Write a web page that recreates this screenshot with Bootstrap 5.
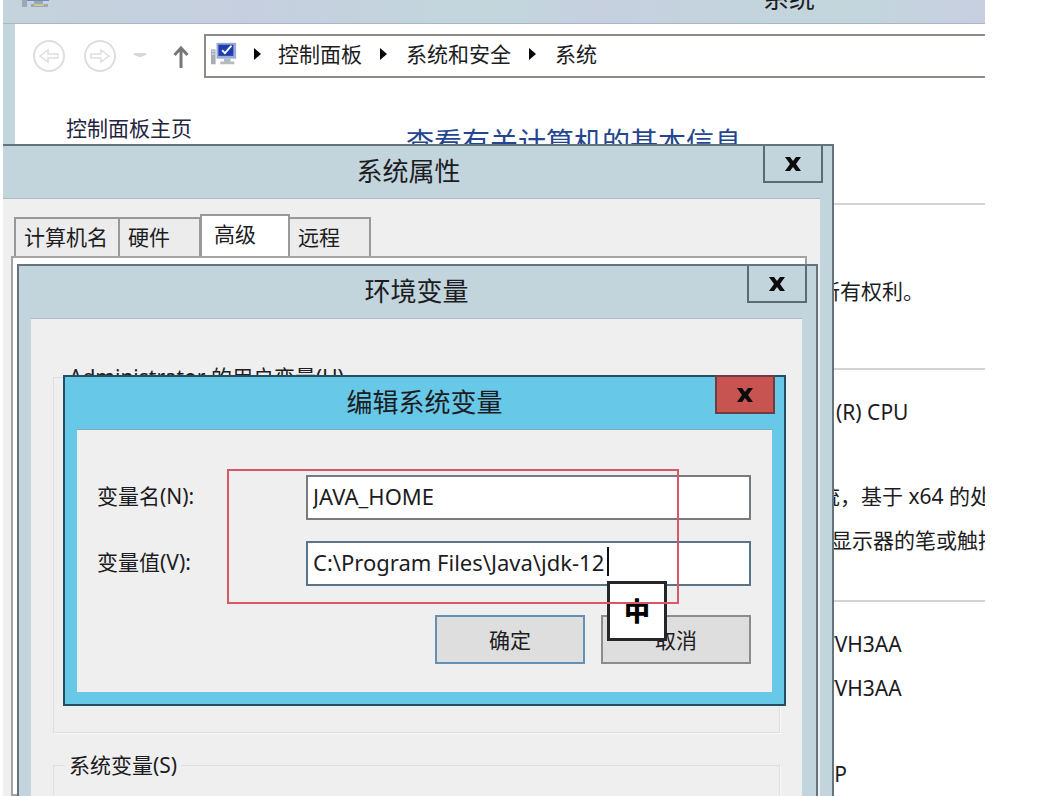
<!DOCTYPE html>
<html lang="zh-CN">
<head>
<meta charset="utf-8">
<meta name="viewport" content="width=device-width, initial-scale=1">
<title>系统</title>
<link href="https://cdn.jsdelivr.net/npm/bootstrap@5.3.0/dist/css/bootstrap.min.css" rel="stylesheet">
<style>
  body { font: 21px/44px "Noto Sans", "Noto Sans CJK SC", sans-serif; color: #1c1c22; background: #fff; }
  .desktop { height: 100vh; padding: 0 56px 0 3px; }
  .explorer { background: #c3d5dd; padding-left: 12px; }
  .explorer-title { height: 24px; margin-left: -12px; padding-right: 170px; border-bottom: 1px solid #aab7c2;
    background: linear-gradient(90deg, #c4d3dc, #c6cfdf 25%, #c2d6dc 50%, #c6d0df 60%, #c2d6dc 85%, #c8cfe0); }
  .explorer-title span, .explorer-title svg { margin-top: -28px; }
  .explorer-title span { font-size: 26px; line-height: 52px; }
  .toolbar { height: 63px; padding-left: 17px; }
  .nav-glyph { width: 34px; height: 34px; }
  .address { height: 44px; margin-left: 14px; padding-bottom: 4px; border: 2px solid #8b8b88; border-right: 0; }
  .address a, .home-link { color: inherit; text-decoration: none; }
  .sep { margin: 0 18px; }
  .side { width: 391px; padding: 19px 0 0 51px; }
  .home-link { color: #24243f; }
  .headline { font-size: 28px; line-height: 34px; padding-top: 38px; margin-bottom: 44px; color: #24468f; }
  .facts { border-top: 2px solid #d3d3d3; padding-left: 413px; }
  .facts p { margin: 0; }
  .facts .ends { padding: 0 0 40px 17px; }
  .facts .inset { padding-left: 12px; }
  .f1 { height: 165px; padding-top: 64px; }
  .f2 { height: 232px; padding-top: 20px; }
  .f3 { padding-top: 20px; }
  .f3 .last { padding-top: 42px; }

  .dialog { position: absolute; background: #c2d4dc; border: 2px solid #65747b; }
  .dialog-title { height: 52px; font-size: 26px; line-height: 50px; }
  .dialog-close { position: absolute; top: -2px; right: 9px; width: 60px; height: 39px; padding: 0; border: 2px solid #596b74;
    background: transparent; color: #0b0b0d; line-height: 1; }
  .dialog-close svg { display: block; margin: auto; }
  .dialog-body { background: #efefef; border-top: 1px solid #a9bcc4; }

  .sys { left: 3px; top: 144px; width: 831px; bottom: 0; border-left: 0; border-bottom: 0; padding-right: 12px; }
  .sys > .dialog-title { padding-right: 6px; }
  .sys > .dialog-body { height: 100%; padding: 15px 13px 0 8px; }
  .tabs { padding-left: 3px; }
  .tabs button { height: 39px; padding: 0 8px; border: 2px solid #97999a; border-bottom: 0; border-right-width: 1px; background: #ececec;
    text-align: left; line-height: 33px; color: inherit; }
  .tabs .w-a { width: 105px; } .tabs .w-b { width: 81px; border-left-width: 1px; }
  .tabs .w-c { width: 90px; height: 44px; padding: 0 12px 5px; margin-bottom: -2px; background: #fff; border-right-width: 2px; }
  .tabs .w-d { width: 81px; border-left: 0; border-right-width: 2px; }
  .tab-panel { height: 100%; background: #fff; border: 2px solid #a2a4a4; }

  .env { left: 17px; top: 264px; width: 801px; bottom: 0; border-bottom: 0; padding: 0 14px 0 12px; }
  .env > .dialog-body { height: 100%; padding: 36px 22px 0; }
  .group { border: 1px solid #dcdfe1; box-shadow: 1px 1px 0 #fafafa; padding: 0 11px; margin: 0; }
  .group legend { float: none; width: auto; margin: 0; padding: 0 4px; font-size: inherit; line-height: 44px; }
  .g-user { height: 378px; } .g-sys { height: 200px; margin-top: 10px; }

  .edit { left: 63px; top: 375px; width: 723px; background: #67c8e8; border-color: #244f62; padding: 0 12px 12px; }
  .edit .dialog-close { background: #c75450; border-color: #6f3c42; }
  .edit .dialog-body { padding: 45px 21px 28px 20px; border-color: #79adc0; }
  .field { margin-bottom: 21px; }
  .field label { width: 209px; line-height: 42px; }
  .field input { height: 45px; padding: 0 5px 4px; border: 2px solid #777a7e; border-radius: 0; background: #fff; color: inherit; font-size: 22px; min-width: 0; }
  .field .now { border-color: #58748a; }
  .edit-btn { width: 150px; height: 49px; padding: 0; border: 2px solid #8c8c8c; background: #dedede; color: inherit; line-height: 40px; }
  .edit-btn.main { border-color: #6490b5; }
  .caret { position: absolute; left: 607px; top: 547px; width: 2px; height: 29px; background: #111; }
  .marker { position: absolute; left: 227px; top: 469px; width: 452px; height: 135px; border: 2px solid #d85868; pointer-events: none; }
  .ime { position: absolute; left: 607px; top: 581px; width: 60px; height: 60px; border: 3px solid #26262a; background: #fff; color: #000; font-size: 26px; font-weight: 900; }
</style>
</head>
<body>
<main class="desktop position-relative overflow-hidden">
  <section class="explorer h-100 d-flex flex-column overflow-hidden">
    <header class="explorer-title d-flex justify-content-between overflow-hidden flex-shrink-0">
      <svg class="ms-3" width="32" height="36" viewBox="0 0 32 36"><path d="M8 8h22v21H8z" fill="#7785c2"/><path d="M3 20h5v15H3zM15 29h9v3h5v3H12v-3h3z" fill="#9ba8b3"/><path d="M15 33h10" stroke="#c5ca8b" stroke-width="2"/></svg>
      <span>系统</span>
    </header>
    <div class="bg-white flex-grow-1 overflow-hidden">
      <nav class="toolbar d-flex align-items-center" aria-label="地址">
        <svg class="nav-glyph" viewBox="0 0 34 34" fill="none" stroke="#dedede" stroke-width="2"><circle cx="17" cy="17" r="15"/><path d="M8 17l8-6v4h10v4H16v4z" stroke-width="1.5"/></svg>
        <svg class="nav-glyph ms-3" viewBox="0 0 34 34" fill="none" stroke="#dedede" stroke-width="2"><circle cx="18" cy="17" r="15"/><path d="M27 17l-8-6v4H9v4h10v4z" stroke-width="1.5"/></svg>
        <svg class="ms-3" width="16" height="16" viewBox="0 0 16 16"><path d="M2 5h12v2l-5 2H7L2 7z" fill="#d8d8d8"/></svg>
        <svg class="ms-4" width="18" height="24" viewBox="0 0 18 24" fill="none" stroke="#777" stroke-width="3"><path d="M9 24V4M2.500 11L9 4l6.500 7"/></svg>
        <div class="address flex-grow-1 d-flex align-items-center">
          <svg class="ms-1" width="28" height="28" viewBox="0 0 30 28"><path d="M1 9h5v16H1z" fill="#a8adb2"/><path d="M2 11h3M2 14h3" stroke="#eee"/><path d="M7 2h21v17H7z" fill="#9daad8"/><path d="M9 4h16v12H9z" fill="#1c3dae"/><path d="M13 10l3 3 7-8" fill="none" stroke="#fff" stroke-width="2"/><path d="M15 19h7v3h4v3H11v-3h4z" fill="#b4bbbf"/></svg>
          <svg class="mx-3" width="8" height="14" viewBox="0 0 8 14"><path d="M0 1l7 6-7 6z" fill="#080808"/></svg>
          <a href="#">控制面板</a>
          <svg class="sep" width="8" height="14" viewBox="0 0 8 14"><path d="M0 1l7 6-7 6z" fill="#080808"/></svg>
          <a href="#">系统和安全</a>
          <svg class="sep" width="8" height="14" viewBox="0 0 8 14"><path d="M0 1l7 6-7 6z" fill="#080808"/></svg>
          <a href="#">系统</a>
        </div>
      </nav>
      <div class="d-flex text-nowrap">
        <aside class="side flex-shrink-0"><a class="home-link" href="#">控制面板主页</a></aside>
        <div class="flex-grow-1 overflow-hidden">
          <h1 class="headline fw-normal">查看有关计算机的基本信息</h1>
          <div class="facts f1"><p>所有权利。</p></div>
          <div class="facts f2">
            <p class="ends">(R) CPU</p>
            <p>统，基于 x64 的处理器</p>
            <p class="inset">显示器的笔或触控输入</p>
          </div>
          <div class="facts f3">
            <p class="ms-1">TVH3AA</p>
            <p class="ms-1">TVH3AA</p>
            <p class="last">UP</p>
          </div>
        </div>
      </div>
    </div>
  </section>

  <section class="dialog sys d-flex flex-column overflow-hidden" role="dialog" aria-label="系统属性">
    <div class="dialog-title text-center flex-shrink-0">系统属性</div>
    <button class="dialog-close" type="button" aria-label="关闭"><svg width="16" height="16" viewBox="0 0 16 16"><path d="M0 1h5l3 4 3-4h5l-5 7 5 7h-5l-3-4-3 4H0l5-7z" fill="currentColor"/></svg></button>
    <div class="dialog-body d-flex flex-column">
      <div class="tabs d-flex align-items-end flex-shrink-0" role="tablist">
        <button class="w-a" role="tab" type="button">计算机名</button>
        <button class="w-b" role="tab" type="button">硬件</button>
        <button class="w-c" role="tab" type="button" aria-selected="true">高级</button>
        <button class="w-d" role="tab" type="button">远程</button>
      </div>
      <div class="tab-panel"></div>
    </div>
  </section>

  <section class="dialog env d-flex flex-column overflow-hidden" role="dialog" aria-label="环境变量">
    <div class="dialog-title text-center flex-shrink-0">环境变量</div>
    <button class="dialog-close" type="button" aria-label="关闭"><svg width="16" height="16" viewBox="0 0 16 16"><path d="M0 1h5l3 4 3-4h5l-5 7 5 7h-5l-3-4-3 4H0l5-7z" fill="currentColor"/></svg></button>
    <div class="dialog-body overflow-hidden">
      <fieldset class="group g-user"><legend>Administrator 的用户变量(U)</legend></fieldset>
      <fieldset class="group g-sys"><legend>系统变量(S)</legend></fieldset>
    </div>
  </section>

  <form class="dialog edit" role="dialog" aria-label="编辑系统变量">
    <div class="dialog-title text-center">编辑系统变量</div>
    <button class="dialog-close" type="button" aria-label="关闭"><svg width="16" height="16" viewBox="0 0 16 16"><path d="M0 1h5l3 4 3-4h5l-5 7 5 7h-5l-3-4-3 4H0l5-7z" fill="currentColor"/></svg></button>
    <div class="dialog-body">
      <div class="field d-flex"><label for="varName">变量名(N):</label><input class="flex-grow-1" id="varName" type="text" value="JAVA_HOME"></div>
      <div class="field d-flex"><label for="varValue">变量值(V):</label><input class="flex-grow-1 now" id="varValue" type="text" value="C:\Program Files\Java\jdk-12"></div>
      <div class="d-flex justify-content-end gap-3 pt-2">
        <button class="edit-btn main" type="submit">确定</button>
        <button class="edit-btn" type="button">取消</button>
      </div>
    </div>
  </form>
  <span class="caret"></span>
  <div class="ime d-flex align-items-center justify-content-center">中</div>
  <div class="marker"></div>
</main>
<script src="https://cdn.jsdelivr.net/npm/bootstrap@5.3.0/dist/js/bootstrap.bundle.min.js"></script>
</body>
</html>
